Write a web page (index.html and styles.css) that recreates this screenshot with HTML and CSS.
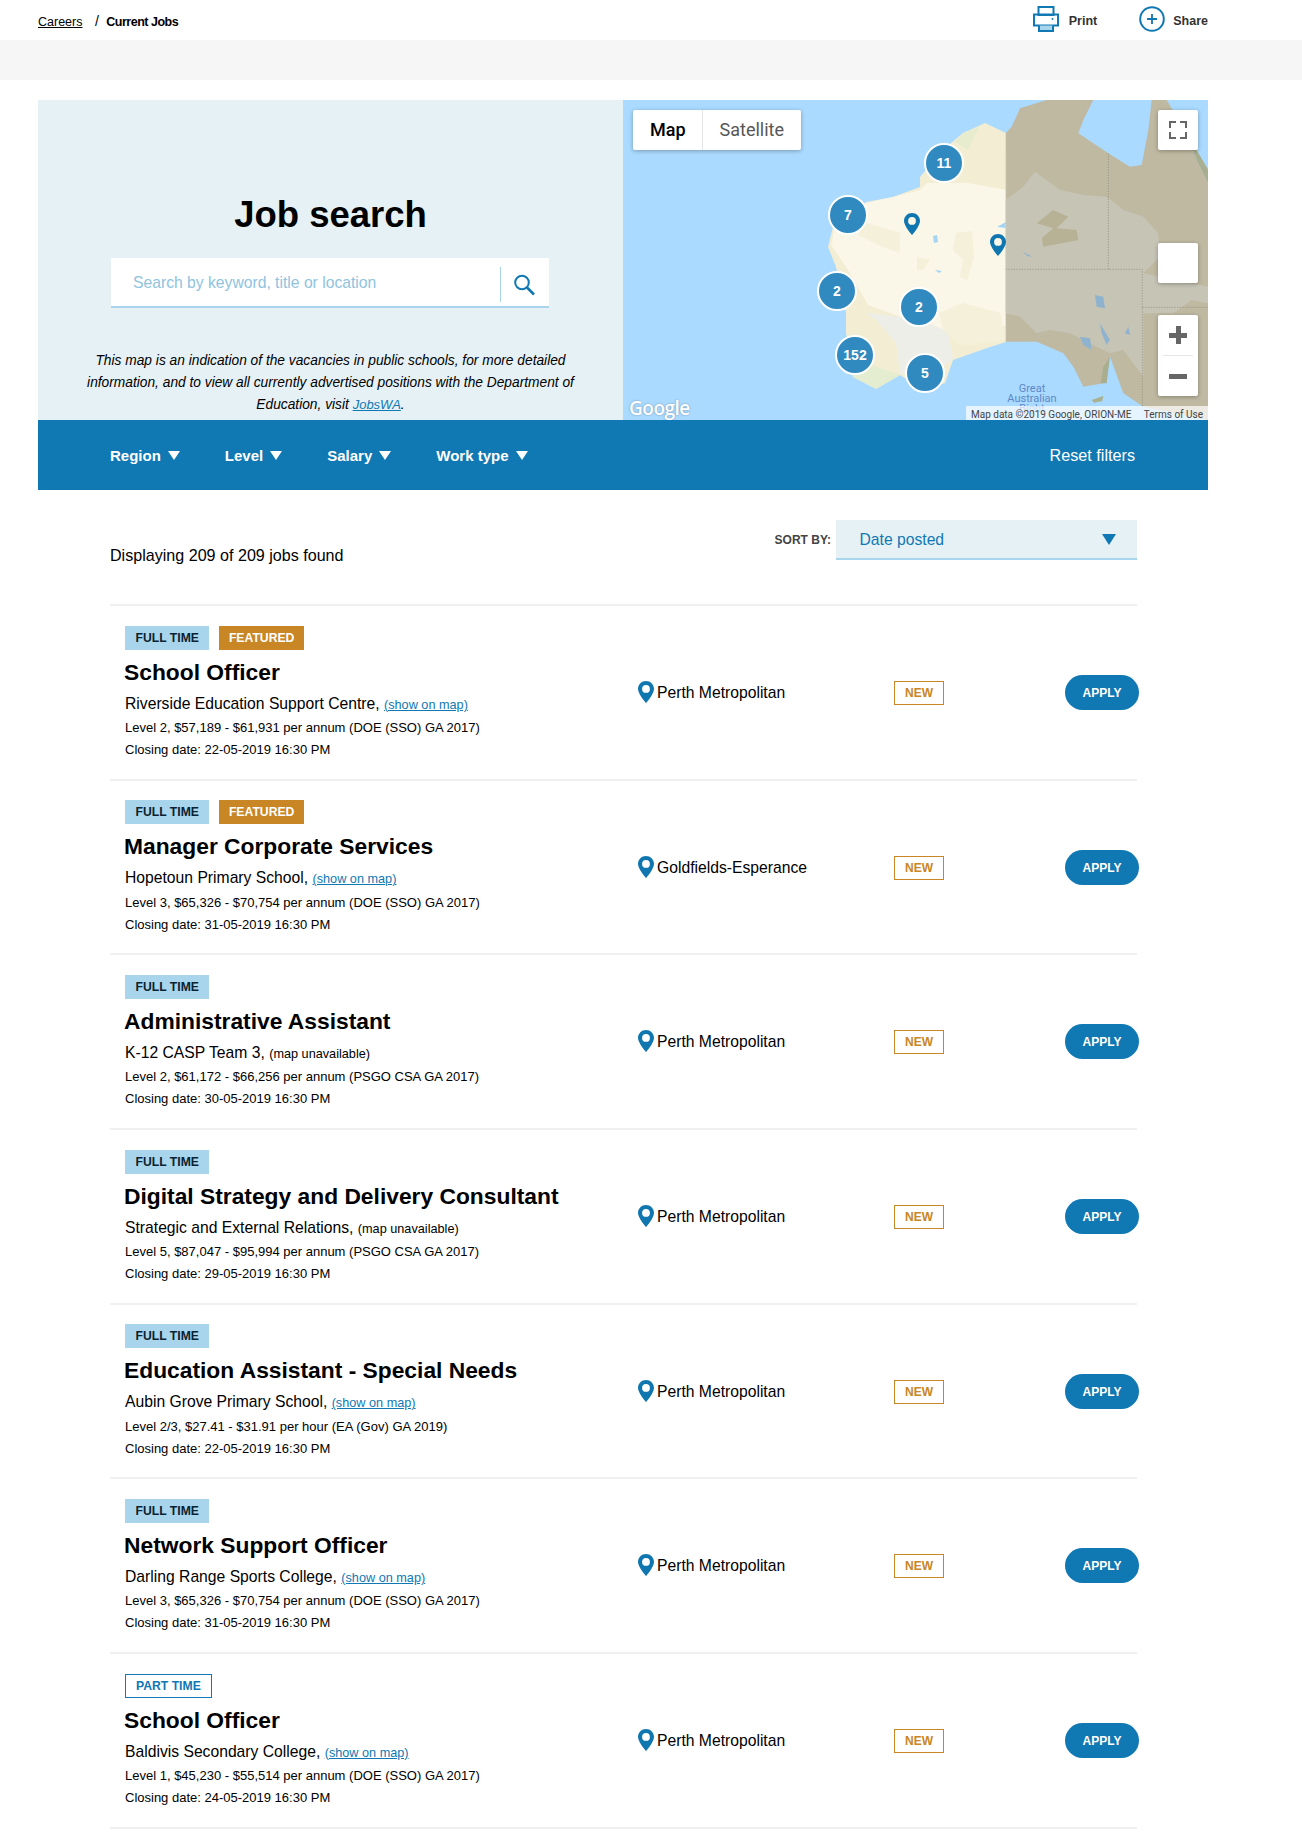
FILE: index.html
```html
<!DOCTYPE html>
<html lang="en">
<head>
    <meta charset="UTF-8">
    <meta name="viewport" content="width=device-width, initial-scale=1.0">
    <title>Current Jobs</title>
    <link rel="stylesheet" href="styles.css">
</head>
<body>

    <svg class="sprites" width="0" height="0">
        <symbol id="pin" viewBox="0 0 16 22">
            <path fill-rule="evenodd" d="M8 0C3.6 0 0 3.5 0 7.9 0 13 8 22 8 22s8-9 8-14.100C16 3.5 12.400 0 8 0zm0 4a3.900 3.900 0 1 1 0 7.800A3.900 3.900 0 0 1 8 4z"/>
        </symbol>
    </svg>

    <header class="topbar">
        <nav class="breadcrumb">
            <a href="#">Careers</a>
            <span class="breadcrumb-sep">/</span>
            <strong>Current Jobs</strong>
        </nav>
        <div class="topbar-actions">
            <a class="action action-print" href="#">
                <svg width="26" height="26" viewBox="0 0 26 26" fill="none" stroke="#1078b3" stroke-width="2">
                    <rect x="5.500" y="1" width="15" height="8"/>
                    <rect x="1" y="8.500" width="24" height="11"/>
                    <path d="M6 19.500v5.500h14v-5.500" fill="#a9d5ec"/>
                    <circle cx="19.500" cy="13" r="1" fill="#1078b3" stroke="none"/>
                </svg>
                Print
            </a>
            <a class="action" href="#">
                <svg width="26" height="26" viewBox="0 0 26 26" fill="none" stroke="#1078b3">
                    <circle cx="13" cy="13" r="11.800" stroke-width="2"/>
                    <path d="M13 8v10M8 13h10" stroke-width="1.800"/>
                </svg>
                Share
            </a>
        </div>
    </header>
    <div class="greybar"></div>

    <main class="main">
        <section class="hero">
            <div class="hero-search">
                <h1>Job search</h1>
                <div class="searchbox">
                    <span class="searchbox-text">Search by keyword, title or location</span>
                    <span class="searchbox-btn">
                        <svg width="24" height="24" viewBox="0 0 24 24" fill="none" stroke="#1078b3">
                            <circle cx="10" cy="9.500" r="6.800" stroke-width="2"/>
                            <path d="M15 14.500l7 7" stroke-width="2.600"/>
                        </svg>
                    </span>
                </div>
                <p class="hero-note">This map is an indication of the vacancies in public schools, for more detailed information, and to view all currently advertised positions with the Department of Education, visit <a href="#">JobsWA</a>.</p>
            </div>

            <div class="map">
                <svg class="map-canvas" width="585" height="320" viewBox="0 0 585 320">
                    <rect width="585" height="320" fill="#aadaff"/>
                    <!-- WA, shapes traced by hand -->
                    <path fill="#f3eed3" d="M362 23L383 33V242L364 248 330 260 322 283 300 290 277 275 253 289 230 277 223 233 223 213 213 167 205 147 210 127 243 102 270 97 297 87 297 77 320 50 340 33z"/>
                    <path fill="#faf6e8" d="M304 83L345 83 383 90V225L350 245 300 225 245 205 225 170 208 145 212 127 243 103 270 97 297 90z"/>
                    <path fill="#e4edcf" d="M230 233L240 262 277 275 253 289 230 277 224 245z"/>
                    <path fill="#e6eccd" d="M332 42L340 33 356 27 345 50z"/>
                    <path fill="#eeeee8" d="M243 213L300 220 325 232 330 258 305 282 277 273 273 243 253 220z"/>
                    <g fill="#f5f0d9">
                        <path d="M243 123L277 133 277 153 260 147 235 135z"/>
                        <path d="M333 133L349 131 351 157 344 180 337 177 340 160 330 150z"/>
                        <path d="M294 157L307 160 300 170 294 170z"/>
                        <path d="M316 213L340 203 377 213 383 240 337 245 320 230z"/>
                    </g>
                    <g fill="#a6d4f5">
                        <path d="M374 127L383 122V128z"/>
                        <path d="M310 136l4-1 1 7-4 1z"/>
                        <path d="M312 170l7 1-3 2z"/>
                    </g>
                    <!-- rest of the country under the grey overlay -->
                    <g transform="translate(382.670 0) scale(.3333)">
                        <path fill="#bfb9a2" d="M0 100L18 80 43 25 123 0H263L233 60 218 100 308 160 373 200 408 195 428 90 438 0H483L543 100 573 180 608 250V960L413 920 353 880 313 770 293 850 233 860 203 800 173 760 93 725H0z"/>
                        <path fill="#c6c4b5" d="M0 300L53 260 88 215 163 270 233 285 303 290 353 330 413 350 458 400 463 470 413 520 553 550 608 560V610L558 600 503 640 413 640V830L353 750 313 760 273 740 193 700 133 690 93 700 43 650 0 640z"/>
                        <path fill="#b7b196" d="M93 370L143 330 188 350 153 385 213 390 218 420 113 440 108 415 143 385z"/>
                        <path fill="#a8ae8e" d="M543 100L573 180 608 250V210L573 150z"/>
                        <g fill="#8fb3cf">
                            <path d="M268 585L293 590 298 625 273 620z"/>
                            <path d="M283 670L313 720 303 735 288 700z"/>
                            <path d="M223 710L253 715 258 750 233 735z"/>
                            <path d="M368 680L373 705 358 700z"/>
                            <path d="M50 455L80 470 65 468z"/>
                        </g>
                        <path fill="#a8ae8e" d="M293 800L313 770 303 850 285 850z"/>
                        <path fill="#aab193" d="M258 900L293 888 290 903 265 908z"/>
                        <g fill="none" stroke="#8e8b78" stroke-width="2" stroke-dasharray="4 4">
                            <path d="M0 508H410V920M308 160V508M410 622H608"/>
                        </g>
                        <path fill="none" stroke="#e3e0cd" stroke-width="3" stroke-dasharray="4 4" d="M0 100V725"/>
                    </g>
                    <use href="#pin" class="map-pin" x="281" y="113" width="16" height="22"/>
                    <use href="#pin" class="map-pin" x="367" y="134" width="16" height="22"/>
                </svg>

                <div class="maptype">
                    <span class="maptype-btn maptype-on">Map</span>
                    <span class="maptype-btn">Satellite</span>
                </div>
                <div class="mapbtn mapbtn-full">
                    <svg width="18" height="18" viewBox="0 0 18 18" fill="none" stroke="#666" stroke-width="2">
                        <path d="M1 7V1h6M11 1h6v6M17 11v6h-6M7 17H1v-6"/>
                    </svg>
                </div>
                <div class="mapbtn mapbtn-street"></div>
                <div class="mapbtn mapbtn-zoom">
                    <span class="zoom-plus"></span>
                    <span class="zoom-line"></span>
                    <span class="zoom-minus"></span>
                </div>

                <span class="cluster c1">11</span>
                <span class="cluster c2">7</span>
                <span class="cluster c3">2</span>
                <span class="cluster c4">2</span>
                <span class="cluster c5">152</span>
                <span class="cluster c6">5</span>

                <span class="map-sea">Great<br>Australian<br>Bight</span>
                <span class="map-google">Google</span>
                <div class="map-attrib"><span>Map data ©2019 Google, ORION-ME</span><span>Terms of Use</span></div>
            </div>
        </section>

        <div class="filters">
            <a class="filter" href="#">Region</a>
            <a class="filter" href="#">Level</a>
            <a class="filter" href="#">Salary</a>
            <a class="filter" href="#">Work type</a>
            <a class="filters-reset" href="#">Reset filters</a>
        </div>

        <div class="results">
            <div class="results-head">
                <p class="results-count">Displaying 209 of 209 jobs found</p>
                <div class="sort">
                    <span class="sort-label">SORT BY:</span>
                    <div class="sort-select">Date posted</div>
                </div>
            </div>

            <article class="job">
                <div class="job-info">
                    <div class="tags"><span class="tag tag-full">FULL TIME</span><span class="tag tag-featured">FEATURED</span></div>
                    <h2>School Officer</h2>
                    <p class="job-school">Riverside Education Support Centre, <a href="#">(show on map)</a></p>
                    <p class="job-meta">Level 2, $57,189 - $61,931 per annum (DOE (SSO) GA 2017)</p>
                    <p class="job-meta">Closing date: 22-05-2019 16:30 PM</p>
                </div>
                <div class="job-loc"><svg class="loc-pin"><use href="#pin"/></svg>Perth Metropolitan</div>
                <div><span class="tag-new">NEW</span></div>
                <a class="apply" href="#">APPLY</a>
            </article>

            <article class="job">
                <div class="job-info">
                    <div class="tags"><span class="tag tag-full">FULL TIME</span><span class="tag tag-featured">FEATURED</span></div>
                    <h2>Manager Corporate Services</h2>
                    <p class="job-school">Hopetoun Primary School, <a href="#">(show on map)</a></p>
                    <p class="job-meta">Level 3, $65,326 - $70,754 per annum (DOE (SSO) GA 2017)</p>
                    <p class="job-meta">Closing date: 31-05-2019 16:30 PM</p>
                </div>
                <div class="job-loc"><svg class="loc-pin"><use href="#pin"/></svg>Goldfields-Esperance</div>
                <div><span class="tag-new">NEW</span></div>
                <a class="apply" href="#">APPLY</a>
            </article>

            <article class="job">
                <div class="job-info">
                    <div class="tags"><span class="tag tag-full">FULL TIME</span></div>
                    <h2>Administrative Assistant</h2>
                    <p class="job-school">K-12 CASP Team 3, <small>(map unavailable)</small></p>
                    <p class="job-meta">Level 2, $61,172 - $66,256 per annum (PSGO CSA GA 2017)</p>
                    <p class="job-meta">Closing date: 30-05-2019 16:30 PM</p>
                </div>
                <div class="job-loc"><svg class="loc-pin"><use href="#pin"/></svg>Perth Metropolitan</div>
                <div><span class="tag-new">NEW</span></div>
                <a class="apply" href="#">APPLY</a>
            </article>

            <article class="job">
                <div class="job-info">
                    <div class="tags"><span class="tag tag-full">FULL TIME</span></div>
                    <h2>Digital Strategy and Delivery Consultant</h2>
                    <p class="job-school">Strategic and External Relations, <small>(map unavailable)</small></p>
                    <p class="job-meta">Level 5, $87,047 - $95,994 per annum (PSGO CSA GA 2017)</p>
                    <p class="job-meta">Closing date: 29-05-2019 16:30 PM</p>
                </div>
                <div class="job-loc"><svg class="loc-pin"><use href="#pin"/></svg>Perth Metropolitan</div>
                <div><span class="tag-new">NEW</span></div>
                <a class="apply" href="#">APPLY</a>
            </article>

            <article class="job">
                <div class="job-info">
                    <div class="tags"><span class="tag tag-full">FULL TIME</span></div>
                    <h2>Education Assistant - Special Needs</h2>
                    <p class="job-school">Aubin Grove Primary School, <a href="#">(show on map)</a></p>
                    <p class="job-meta">Level 2/3, $27.41 - $31.91 per hour (EA (Gov) GA 2019)</p>
                    <p class="job-meta">Closing date: 22-05-2019 16:30 PM</p>
                </div>
                <div class="job-loc"><svg class="loc-pin"><use href="#pin"/></svg>Perth Metropolitan</div>
                <div><span class="tag-new">NEW</span></div>
                <a class="apply" href="#">APPLY</a>
            </article>

            <article class="job">
                <div class="job-info">
                    <div class="tags"><span class="tag tag-full">FULL TIME</span></div>
                    <h2>Network Support Officer</h2>
                    <p class="job-school">Darling Range Sports College, <a href="#">(show on map)</a></p>
                    <p class="job-meta">Level 3, $65,326 - $70,754 per annum (DOE (SSO) GA 2017)</p>
                    <p class="job-meta">Closing date: 31-05-2019 16:30 PM</p>
                </div>
                <div class="job-loc"><svg class="loc-pin"><use href="#pin"/></svg>Perth Metropolitan</div>
                <div><span class="tag-new">NEW</span></div>
                <a class="apply" href="#">APPLY</a>
            </article>

            <article class="job">
                <div class="job-info">
                    <div class="tags"><span class="tag tag-part">PART TIME</span></div>
                    <h2>School Officer</h2>
                    <p class="job-school">Baldivis Secondary College, <a href="#">(show on map)</a></p>
                    <p class="job-meta">Level 1, $45,230 - $55,514 per annum (DOE (SSO) GA 2017)</p>
                    <p class="job-meta">Closing date: 24-05-2019 16:30 PM</p>
                </div>
                <div class="job-loc"><svg class="loc-pin"><use href="#pin"/></svg>Perth Metropolitan</div>
                <div><span class="tag-new">NEW</span></div>
                <a class="apply" href="#">APPLY</a>
            </article>
        </div>
    </main>

</body>
</html>
```

FILE: styles.css
```css
body {
    font-family: "Liberation Sans", Arial, sans-serif;
    color: #000;
    background-color: #fff;
    margin: 0;
    padding: 0;
}

a {
    color: #1078b3;
}

.sprites {
    position: absolute;
}

/* top */
.topbar {
    height: 40px;
    box-sizing: border-box;
    padding: 2px 94px 0 38px;
    display: flex;
    align-items: center;
    justify-content: space-between;
    font-size: 12.5px;
}

.breadcrumb a {
    color: #000;
}

.breadcrumb-sep {
    margin: 0 4px 0 9px;
    font-size: 14px;
}

.breadcrumb strong {
    letter-spacing: -0.5px;
}

.topbar-actions {
    display: flex;
}

.action {
    display: flex;
    align-items: center;
    gap: 8px;
    color: #333;
    font-weight: bold;
    text-decoration: none;
    font-size: 12.5px;
}

.action svg {
    margin-top: -4px;
}

.action-print {
    gap: 10px;
    margin-right: 42px;
}

.greybar {
    height: 40px;
    background-color: #f6f6f6;
}

.main {
    width: 1170px;
    margin: 20px 0 0 38px;
}

/* hero */
.hero {
    display: flex;
    height: 320px;
}

.hero-search {
    width: 585px;
    background-color: #e6f1f6;
    box-sizing: border-box;
    padding-top: 92px;
    text-align: center;
}

.hero-search h1 {
    font-size: 36.5px;
    line-height: 46px;
    margin: 0 0 20px;
}

.searchbox {
    width: 438px;
    height: 50px;
    margin: 0 0 0 73px;
    display: flex;
    background-color: #fff;
    border-bottom: 2px solid #a9d5ec;
    box-sizing: border-box;
    text-align: left;
}

.searchbox-text {
    flex: 1;
    padding-left: 22px;
    line-height: 50px;
    font-size: 15.7px;
    color: #8fc3e0;
}

.searchbox-btn {
    width: 46px;
    height: 35px;
    margin-top: 9px;
    border-left: 1px solid #a9d5ec;
    display: flex;
    align-items: center;
    justify-content: center;
    padding-right: 2px;
}

.hero-note {
    margin: 42px 0 0;
    padding: 0 30px;
    font-size: 13.75px;
    line-height: 22px;
    font-style: italic;
}

.hero-note a {
    font-size: 13px;
}

/* map */
.map {
    position: relative;
    width: 585px;
    height: 320px;
    overflow: hidden;
    background-color: #aadaff;
    font-family: Roboto, Arial, sans-serif;
}

.map-canvas {
    display: block;
}

.map-pin {
    fill: #0f76b0;
}

.maptype {
    position: absolute;
    left: 10px;
    top: 10px;
    display: flex;
    height: 40px;
    background-color: #fff;
    border-radius: 2px;
    box-shadow: 0 1px 4px rgba(0, 0, 0, 0.3);
}

.maptype-btn {
    padding: 0 17px 0 17px;
    font-size: 18px;
    line-height: 40px;
    color: #565656;
}

.maptype-on {
    padding-right: 16px;
    color: #000;
    font-weight: 500;
    border-right: 1px solid #e6e6e6;
}

.mapbtn {
    position: absolute;
    left: 535px;
    width: 40px;
    background-color: #fff;
    border-radius: 2px;
    box-shadow: 0 1px 4px rgba(0, 0, 0, 0.3);
}

.mapbtn-full {
    top: 10px;
    height: 40px;
    display: flex;
    align-items: center;
    justify-content: center;
}

.mapbtn-street {
    top: 143px;
    height: 40px;
}

.mapbtn-zoom {
    top: 215px;
    height: 81px;
}

.zoom-plus,
.zoom-minus,
.zoom-line {
    position: absolute;
    display: block;
}

.zoom-line {
    left: 5px;
    right: 5px;
    top: 40px;
    height: 1px;
    background-color: #e6e6e6;
}

.zoom-plus {
    left: 11px;
    top: 11px;
    width: 18px;
    height: 18px;
    background:
        linear-gradient(#666, #666) center / 18px 5px no-repeat,
        linear-gradient(#666, #666) center / 5px 18px no-repeat;
}

.zoom-minus {
    left: 11px;
    top: 59px;
    width: 18px;
    height: 5px;
    background-color: #666;
}

.cluster {
    position: absolute;
    width: 36px;
    height: 36px;
    line-height: 36px;
    border: 2px solid #fff;
    border-radius: 50%;
    background-color: #3089bf;
    color: #fff;
    font-family: "Liberation Sans", Arial, sans-serif;
    font-weight: bold;
    font-size: 14px;
    text-align: center;
}

.c1 { left: 301px; top: 43px; }
.c2 { left: 205px; top: 95px; }
.c3 { left: 194px; top: 171px; }
.c4 { left: 276px; top: 187px; }
.c5 { left: 212px; top: 235px; }
.c6 { left: 282px; top: 253px; }

.map-sea {
    position: absolute;
    left: 374px;
    top: 284px;
    width: 70px;
    text-align: center;
    font-size: 11px;
    line-height: 10px;
    color: #5f88c7;
}

.map-google {
    position: absolute;
    left: 6px;
    top: 295px;
    font-family: "Open Sans", Arial, sans-serif;
    font-size: 19px;
    font-weight: 600;
    letter-spacing: -0.5px;
    color: #fff;
    text-shadow: 0 0 2px rgba(0, 0, 0, 0.35);
}

.map-attrib {
    position: absolute;
    right: 0;
    bottom: 0;
    width: 242px;
    height: 14px;
    box-sizing: border-box;
    padding: 0 5px;
    display: flex;
    justify-content: space-between;
    background-color: rgba(255, 255, 255, 0.7);
    font-size: 10px;
    line-height: 17px;
    color: #444;
    overflow: hidden;
}

/* filter bar */
.filters {
    height: 70px;
    background-color: #1078b3;
    display: flex;
    align-items: center;
    padding: 0 73px 0 72px;
    color: #fff;
}

.filter {
    color: #fff;
    font-weight: bold;
    font-size: 15px;
    text-decoration: none;
    margin-right: 45px;
}

.filter::after {
    content: "";
    display: inline-block;
    margin-left: 7px;
    border-left: 6px solid transparent;
    border-right: 6px solid transparent;
    border-top: 9px solid #fff;
    vertical-align: 1px;
}

.filters-reset {
    margin-left: auto;
    color: #fff;
    font-size: 16.2px;
    text-decoration: none;
}

/* results */
.results {
    margin-left: 72px;
    width: 1027px;
}

.results-head {
    height: 114px;
    position: relative;
}

.results-count {
    position: absolute;
    left: 0;
    top: 55px;
    margin: 0;
    font-size: 16.1px;
    line-height: 20px;
}

.sort {
    position: absolute;
    right: 0;
    top: 30px;
    display: flex;
    align-items: center;
}

.sort-label {
    font-size: 12px;
    font-weight: bold;
    color: #444;
    margin-right: 5px;
}

.sort-select {
    position: relative;
    width: 301px;
    height: 40px;
    box-sizing: border-box;
    padding-left: 23.5px;
    background-color: #e6f1f6;
    border-bottom: 2px solid #a9d5ec;
    color: #1078b3;
    font-size: 15.7px;
    line-height: 39px;
}

.sort-select::after {
    content: "";
    position: absolute;
    right: 21px;
    top: 14px;
    border-left: 7px solid transparent;
    border-right: 7px solid transparent;
    border-top: 11px solid #1078b3;
}

.job {
    height: 174.7px;
    box-sizing: border-box;
    border-top: 2px solid #f0f0f0;
    padding-left: 15px;
    display: grid;
    grid-template-columns: 513px 256px 171px 72px;
    align-items: center;
}

.job:last-child {
    height: 176.7px;
    border-bottom: 2px solid #f0f0f0;
}

.job-info {
    align-self: start;
    padding-top: 19.5px;
}

.tags {
    display: flex;
    gap: 10px;
    height: 24px;
}

.tag {
    box-sizing: border-box;
    height: 24px;
    line-height: 24px;
    padding: 0 10.5px;
    font-size: 12.2px;
    font-weight: bold;
}

.tag-full {
    background-color: #a9d5ec;
    color: #0b2230;
}

.tag-featured {
    padding: 0 9.5px;
    background-color: #c98624;
    color: #fff;
}

.tag-part {
    border: 1px solid #1078b3;
    color: #1078b3;
    line-height: 22px;
    padding: 0 10px;
}

.job h2 {
    margin: 7px 0 6px -1px;
    font-size: 22.8px;
    line-height: 30px;
}

.job p {
    margin: 0;
}

.job p.job-school {
    font-size: 15.7px;
    line-height: 22px;
    margin-bottom: 1.5px;
}

.job-school a,
.job-school small {
    font-size: 12.7px;
}

.job-meta {
    font-size: 13px;
    line-height: 22px;
}

.job-loc {
    display: flex;
    align-items: center;
    font-size: 15.7px;
    margin-top: 1px;
}

.loc-pin {
    width: 16px;
    height: 22px;
    margin-right: 3px;
    margin-top: -2px;
    fill: #0f76b0;
}

.tag-new {
    display: inline-block;
    box-sizing: border-box;
    width: 50px;
    height: 24px;
    margin-top: 1px;
    line-height: 22px;
    border: 1px solid #c98624;
    color: #c98624;
    font-size: 12px;
    font-weight: bold;
    text-align: center;
}

.apply {
    display: block;
    width: 74px;
    height: 35px;
    line-height: 36px;
    border-radius: 18px;
    background-color: #1078b3;
    color: #fff;
    font-size: 12px;
    font-weight: bold;
    text-align: center;
    text-decoration: none;
}
```
